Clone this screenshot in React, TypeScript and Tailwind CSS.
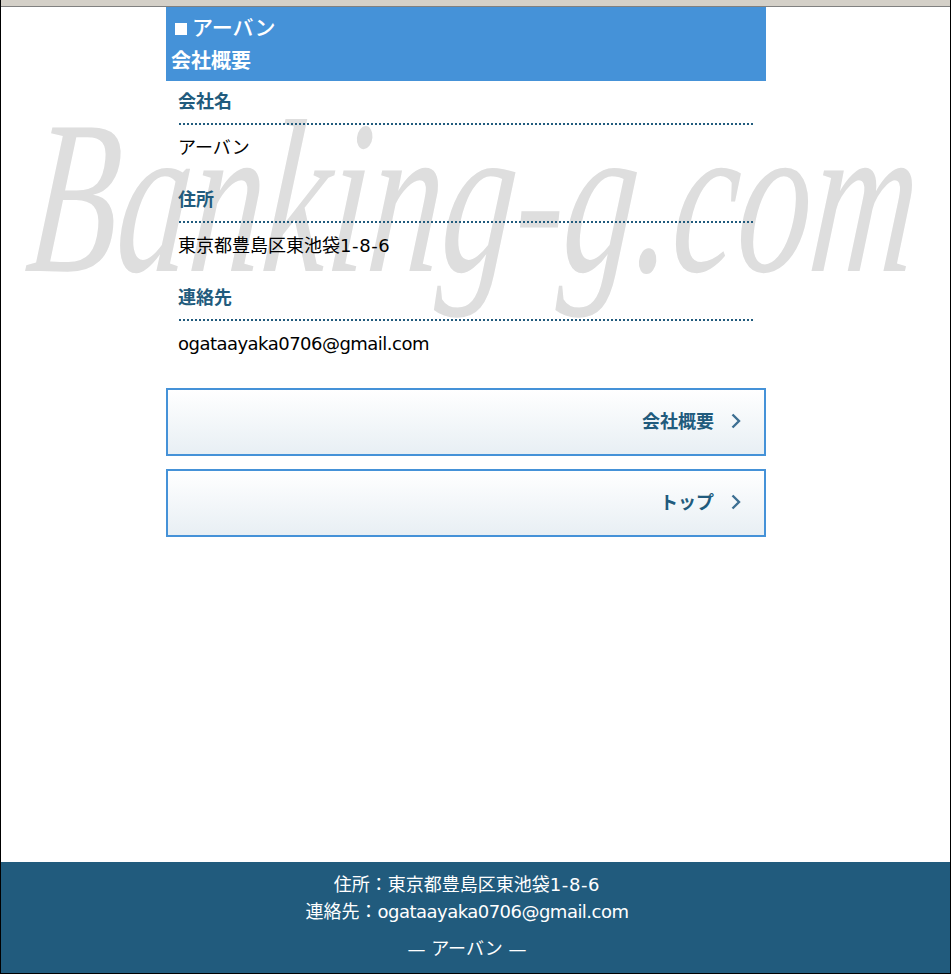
const bodyFont = 'font-["DejaVu_Sans","Noto_Sans_CJK_JP",sans-serif]';

const address = (
  <>
    東京都豊島区東池袋<span className="tracking-[0.6px]">1-8-6</span>
  </>
);
const email = <span className="tracking-[-0.52px]">ogataayaka0706@gmail.com</span>;

const profile = [
  { label: '会社名', value: 'アーバン' },
  { label: '住所', value: address },
  { label: '連絡先', value: email },
];

function Chevron() {
  return (
    <svg width="10" height="16" viewBox="0 0 10 16" className="ml-[17px] mr-[23px] mt-[-1px] shrink-0">
      <path d="M1.5 1.5 L8 8 L1.5 14.5" fill="none" stroke="#3d6f92" strokeWidth="2.4" />
    </svg>
  );
}

function NavButton({ label }: { label: string }) {
  return (
    <a className="flex h-[68px] items-center justify-end border-2 border-[#4592d8] bg-gradient-to-b from-white to-[#e8eff4] pb-[2px] text-[18px] font-bold text-[#215b7d]">
      <span>{label}</span>
      <Chevron />
    </a>
  );
}

export default function App() {
  return (
    <div className={`relative flex h-[974px] w-[951px] flex-col overflow-hidden border-x border-b border-black bg-white text-[18px] text-black ${bodyFont}`}>
      <div className="h-[7px] shrink-0 border-b border-[#808080] bg-[#d4d0c8]" />

      {/* watermark behind the page content */}
      <div className='pointer-events-none absolute left-[40px] top-[88px] origin-top-left -skew-x-[8deg] scale-y-[1.5] whitespace-nowrap font-["Liberation_Serif",serif] text-[146px] italic leading-[146px] text-[#dedede]'>
        Banking-g.com
      </div>

      <main className="relative ml-[165px] w-[600px] flex-1">
        <header className="h-[74px] bg-[#4592d8] text-white">
          <div className="flex h-[42px] items-center pl-[9px] pt-[1px] text-[21px] font-medium leading-none">
            <span className="mr-[5px] h-[12px] w-[12px] bg-white" />
            <span>アーバン</span>
          </div>
          <h1 className="pl-[5px] text-[20px] font-bold leading-[24px]">会社概要</h1>
        </header>

        <dl className="px-[13px] pt-[7px]">
          {profile.map((item) => (
            <div key={item.label} className="h-[98px]">
              <dt className="flex h-[37px] items-center border-b-2 border-dotted border-[#215b7d] pb-[9px] font-bold text-[#215b7d]">
                <span className="-ml-[1px]">{item.label}</span>
              </dt>
              <dd className="-ml-[1px] pt-[10px] leading-[26px]">{item.value}</dd>
            </div>
          ))}
        </dl>

        <nav className="mt-[6px] flex flex-col gap-[13px]">
          <NavButton label="会社概要" />
          <NavButton label="トップ" />
        </nav>
      </main>

      <footer className="relative h-[111px] shrink-0 bg-[#215b7d] pt-[9px] text-center text-white">
        <p className="pr-[17px] leading-[27px]">住所：{address}</p>
        <p className="pr-[17px] leading-[27px]">連絡先：{email}</p>
        <p className="mt-[10px] pr-[17px] leading-[27px]">— アーバン —</p>
      </footer>
    </div>
  );
}
